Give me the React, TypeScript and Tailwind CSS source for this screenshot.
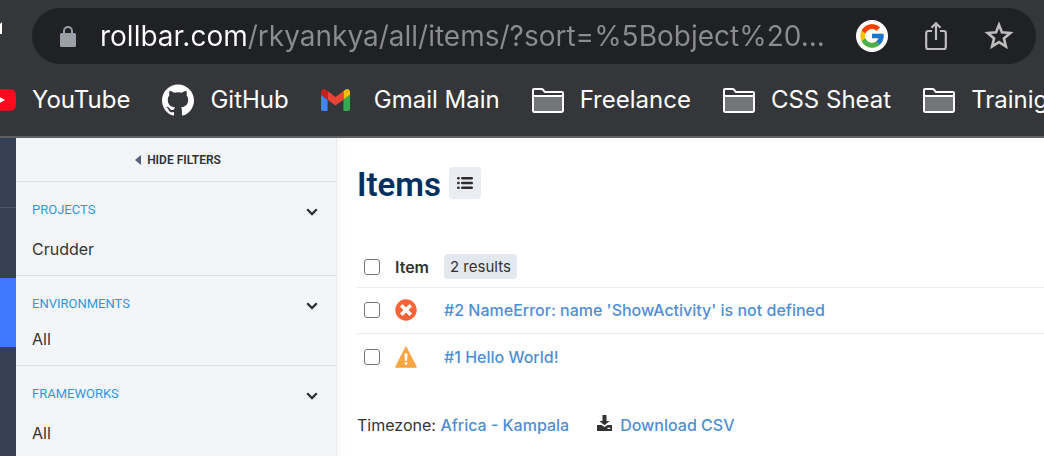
import React from "react";
import { FcGoogle } from "react-icons/fc";
import { SiGithub } from "react-icons/si";

function LockIcon() {
  return (
    <svg viewBox="0 0 16 21" className="h-[21px] w-4 shrink-0" aria-hidden="true">
      <path d="M4 8V5a4 4 0 0 1 8 0v3" fill="none" stroke="#9aa0a6" strokeWidth="2" />
      <rect x="0" y="7" width="16" height="14" rx="1.5" fill="#9aa0a6" />
    </svg>
  );
}

function ShareIcon() {
  return (
    <svg viewBox="0 0 24 30" className="h-[30px] w-6" fill="none" stroke="#bdbdbd" strokeWidth="2.2" aria-hidden="true">
      <path d="M8 10H4.2a2 2 0 0 0-2 2v14a2 2 0 0 0 2 2h15.6a2 2 0 0 0 2-2V12a2 2 0 0 0-2-2H16" />
      <path d="M12 19V2.5M7.5 6.8 12 2.3l4.500 4.500" />
    </svg>
  );
}

function StarIcon() {
  return (
    <svg viewBox="0 0 30 30" className="size-[30px]" aria-hidden="true">
      <path
        d="M15 3.900 17.900 11.300 26.300 12 19.900 17.400 21.900 25.500 15 21.100 8.100 25.500 10.100 17.400 3.700 12 12.100 11.300Z"
        fill="none"
        stroke="#bdbdbd"
        strokeWidth="2.6"
      />
    </svg>
  );
}

function YouTubeIcon() {
  return (
    <svg viewBox="0 0 32 22" className="h-[22px] w-8" aria-hidden="true">
      <path d="M4 .6C8 0 24 0 28 .6c2.400.3 3.400 1.400 3.700 3.700.4 3.700.4 9.700 0 13.400-.3 2.300-1.300 3.400-3.700 3.700-4 .6-20 .6-24 0C1.600 21.100.6 20 .3 17.700c-.4-3.700-.4-9.700 0-13.400C.6 2 1.600.9 4 .6Z" fill="#ff0a1e" />
      <path d="m12.800 6.300 8.200 4.700-8.200 4.700Z" fill="#fff" />
    </svg>
  );
}

function GmailIcon() {
  return (
    <svg viewBox="52 42 88 66" className="h-[22px] w-[29px]" aria-hidden="true">
      <path fill="#4285f4" d="M58 108h14V74L52 59v43c0 3.320 2.690 6 6 6" />
      <path fill="#34a853" d="M120 108h14c3.320 0 6-2.690 6-6V59l-20 15" />
      <path fill="#fbbc04" d="M120 48v26l20-15v-8c0-7.420-8.470-11.650-14.400-7.200" />
      <path fill="#ea4335" d="M72 74V48l24 18 24-18v26L96 92" />
      <path fill="#c5221f" d="M52 51v8l20 15V48l-5.600-4.200c-5.940-4.450-14.400-.22-14.400 7.200" />
    </svg>
  );
}

function FolderIcon() {
  return (
    <svg viewBox="0 0 32 25" className="h-[25px] w-8" aria-hidden="true">
      <path d="M1 7.500h30V22a2 2 0 0 1-2 2H3a2 2 0 0 1-2-2Z" fill="#737476" />
      <path
        d="M1 22V2a1 1 0 0 1 1-1h7.500c.8 0 1.200.3 1.700.9l1.600 2.100H30a1 1 0 0 1 1 1v17.500a1.500 1.500 0 0 1-1.500 1.500h-27A1.500 1.500 0 0 1 1 22.500ZM1 8h30"
        fill="none"
        stroke="#fff"
        strokeWidth="2"
      />
    </svg>
  );
}

function ChevronIcon() {
  return (
    <svg viewBox="0 0 12 8" className="h-2 w-3" fill="none" stroke="#2d2f33" strokeWidth="2.2" aria-hidden="true">
      <path d="m1.200 1.200 4.800 4.900 4.800-4.900" />
    </svg>
  );
}

function ListIcon() {
  return (
    <svg viewBox="0 0 16 12" className="h-3 w-4" stroke="#2f2b2e" strokeWidth="2.400" strokeLinecap="round" aria-hidden="true">
      <path d="M5.200 1.200h9.600M5.200 6h9.600M5.200 10.800h9.600M1.200 1.200h.4M1.200 6h.4M1.200 10.800h.4" />
    </svg>
  );
}

function ErrorIcon() {
  return (
    <svg viewBox="0 0 22 22" className="size-[22px]" role="img" aria-label="Error">
      <circle cx="11" cy="11" r="10.700" fill="#fa6237" />
      <path d="m6.200 6.200 9.600 9.600M15.800 6.200l-9.600 9.600" stroke="#fff" strokeWidth="3.600" />
    </svg>
  );
}

function WarningIcon() {
  return (
    <svg viewBox="0 0 22 22" className="size-[22px]" role="img" aria-label="Warning">
      <path d="M11 .8 21.500 21.200H.5Z" fill="#fba540" stroke="#fba540" strokeLinejoin="round" />
      <path d="M9.400 7.500h3.200l-.5 7.300H9.900ZM9.700 16.200h2.600v2.600H9.700Z" fill="#fff" />
    </svg>
  );
}

function DownloadIcon() {
  return (
    <svg viewBox="0 0 15 16" className="h-4 w-[15px]" fill="#333" aria-hidden="true">
      <path d="M5.500 0h4v6h3.100L7.500 10.300 2.400 6h3.100Z" />
      <path fillRule="evenodd" d="M0 10h4.600l2.900 2 2.900-2H15v6H0ZM10.500 12.700v1.200h2.800v-1.200Z" />
    </svg>
  );
}

const bookmarks = [
  { label: "YouTube", icon: <YouTubeIcon />, gap: "gap-4" },
  { label: "GitHub", icon: <SiGithub className="size-8" />, gap: "gap-4" },
  { label: "Gmail Main", icon: <GmailIcon />, gap: "gap-6" },
  { label: "Freelance", icon: <FolderIcon />, gap: "gap-4" },
  { label: "CSS Sheat", icon: <FolderIcon />, gap: "gap-4" },
  { label: "Trainig", icon: <FolderIcon />, gap: "gap-4" },
];

function BrowserBar() {
  return (
    <header className="shrink-0 overflow-hidden border-b-2 border-[#5f6064] bg-[#35363a] font-['Inter','Liberation_Sans',sans-serif] text-white">
      <div className="flex items-center pt-2 pr-2">
        <div className="w-8 shrink-0">
          <svg viewBox="0 0 2 12" className="mb-4 h-3 w-0.5" aria-hidden="true">
            <path d="M2 0v12H0V2Z" fill="#fff" />
          </svg>
        </div>
        <div className="flex h-14 min-w-0 grow items-center rounded-full bg-[#202124] pr-[22px] pl-7">
          <LockIcon />
          <input
            type="text"
            aria-label="Address"
            defaultValue="rollbar.com/rkyankya/all/items/?sort=%5Bobject%20..."
            className="ml-6 min-w-0 grow bg-[linear-gradient(90deg,#fff_148px,#8b8c8e_148px)] bg-clip-text text-[28px] leading-10 text-transparent outline-none"
          />
          <button type="button" aria-label="Google" className="flex size-8 shrink-0 items-center justify-center rounded-full bg-white">
            <FcGoogle className="size-7" />
          </button>
          <button type="button" aria-label="Share" className="ml-9 shrink-0">
            <ShareIcon />
          </button>
          <button type="button" aria-label="Bookmark this page" className="ml-9 shrink-0">
            <StarIcon />
          </button>
        </div>
      </div>
      <nav aria-label="Bookmarks" className="-ml-4 flex h-[72px] items-center gap-8">
        {bookmarks.map((b) => (
          <a key={b.label} href="#" className={`flex shrink-0 items-center text-2xl ${b.gap}`}>
            {b.icon}
            {b.label}
          </a>
        ))}
      </nav>
    </header>
  );
}

const filters = [
  { title: "PROJECTS", value: "Crudder", space: "mt-5" },
  { title: "ENVIRONMENTS", value: "All", space: "mt-4" },
  { title: "FRAMEWORKS", value: "All", space: "mt-5" },
];

function Sidebar() {
  return (
    <aside className="w-80 shrink-0 bg-[#f4f5f8] text-[#333]">
      <button type="button" className="flex h-11 w-full items-center justify-center gap-1.5 border-b border-[#dfe1e5] pl-1 text-xs font-semibold text-[#2f3136]">
        <svg viewBox="0 0 6 10" className="h-2.5 w-1.5" aria-hidden="true">
          <path d="M6 0v10L0 5Z" fill="#56617a" />
        </svg>
        HIDE FILTERS
      </button>
      {filters.map((f) => (
        <section key={f.title} className="border-b border-[#dfe1e5] px-4 pt-5 pb-3.5">
          <button type="button" className="flex h-4 w-full items-center justify-between pr-0.5 text-[13px] text-[#3197dd]">
            {f.title}
            <span className="pt-1">
              <ChevronIcon />
            </span>
          </button>
          <p className={`font-['Inter','Liberation_Sans',sans-serif] text-base leading-[23px] ${f.space}`}>{f.value}</p>
        </section>
      ))}
    </aside>
  );
}

const items = [
  { title: "#2 NameError: name 'ShowActivity' is not defined", icon: <ErrorIcon /> },
  { title: "#1 Hello World!", icon: <WarningIcon /> },
];

const checkbox = "ml-[7px] block size-4 appearance-none rounded-[3px] border border-[#767676] bg-white";

function ItemsPanel() {
  return (
    <main className="min-w-0 grow border-l border-[#ebecee] bg-white bg-linear-to-r from-[#f9f9fa] to-white to-[10px] pt-[29px] pl-5 font-['Inter','Liberation_Sans',sans-serif] text-base text-[#333]">
      <div className="flex h-8 items-center gap-2">
        <h1 className="pt-1 font-['Roboto','Liberation_Sans',sans-serif] text-[33px] font-semibold text-[#00305f]">Items</h1>
        <button type="button" aria-label="List view" className="flex size-8 items-center justify-center rounded bg-[#e9ecf1]">
          <ListIcon />
        </button>
      </div>
      <table className="mt-12 w-full table-fixed text-left">
        <thead>
          <tr className="h-10 border-b border-[#ececee]">
            <th className="w-[38px] p-0">
              <input type="checkbox" aria-label="Select all items" className={checkbox} />
            </th>
            <th className="w-[49px] p-0 font-semibold">Item</th>
            <th className="p-0 font-normal">
              <span className="inline-block rounded bg-[#e3e8ef] px-1.5 text-[15px] leading-[25px]">2 results</span>
            </th>
          </tr>
        </thead>
        <tbody>
          {items.map((item) => (
            <tr key={item.title} className="h-[46px] border-b border-[#ececee] last:h-[48px] last:border-0">
              <td className="p-0">
                <input type="checkbox" aria-label={item.title} className={checkbox} />
              </td>
              <td className="p-0">{item.icon}</td>
              <td className="p-0">
                <a href="#" className="font-medium text-[#4f8ed6]">{item.title}</a>
              </td>
            </tr>
          ))}
        </tbody>
      </table>
      <footer className="mt-8 flex items-center leading-6">
        <p>
          Timezone: <a href="#" className="font-medium text-[#4f8ed6]">Africa - Kampala</a>
        </p>
        <a href="#" className="ml-7 flex items-center gap-2 font-medium text-[#4f8ed6]">
          <span className="pb-1">
            <DownloadIcon />
          </span>
          Download CSV
        </a>
      </footer>
    </main>
  );
}

export default function App() {
  return (
    <div className="flex h-screen flex-col overflow-hidden bg-white">
      <BrowserBar />
      <div className="flex min-h-0 grow font-['Roboto','Liberation_Sans',sans-serif]">
        <nav aria-label="Main" className="w-4 shrink-0 bg-[#354054]">
          <div className="h-[70px] border-b border-[#4b566a]" />
          <div className="h-[70px]" />
          <div className="h-[69px] bg-[#4079ff]" />
        </nav>
        <Sidebar />
        <ItemsPanel />
      </div>
    </div>
  );
}
